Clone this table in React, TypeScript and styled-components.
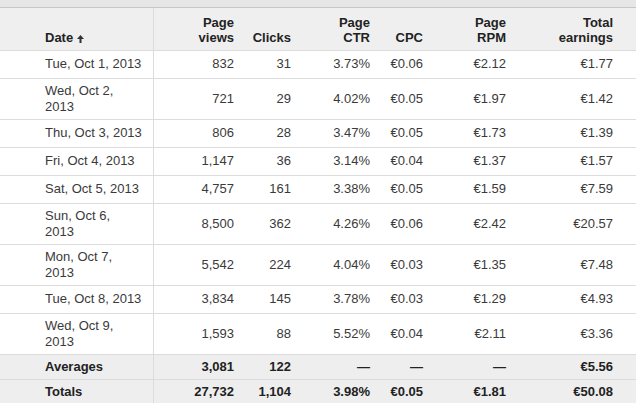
import React from "react";
import styled, { createGlobalStyle } from "styled-components";

const Global = createGlobalStyle`
  html, body { margin: 0; padding: 0; background: #ffffff; }
  body { font-family: "Liberation Sans", Arial, sans-serif; font-size: 13px; color: #333; }
`;

const Page = styled.div`
  width: 636px;
  height: 403px;
  overflow: hidden;
  background: #fff;
`;

const TopStrip = styled.div`
  height: 7px;
  background: #e6e6e6;
  border-bottom: 1px solid #c6c6c6;
`;

const Table = styled.table`
  width: 636px;
  border-collapse: collapse;
  table-layout: fixed;
`;

const HeadRow = styled.tr`
  background: #efefef;
  height: 42px;
`;

const Th = styled.th<{ $align?: "left" | "right"; $first?: boolean; $last?: boolean }>`
  font-weight: bold;
  font-size: 13px;
  line-height: 15px;
  color: #222;
  vertical-align: bottom;
  text-align: ${(p) => p.$align ?? "right"};
  padding: 0 ${(p) => (p.$last ? "23px" : "7px")} 5px ${(p) => (p.$first ? "45px" : "0")};
  border-right: ${(p) => (p.$first ? "1px solid #dcdcdc" : "none")};
`;

const Row = styled.tr<{ $kind?: "data" | "summary" }>`
  height: ${(p) => (p.$kind === "summary" ? "25px" : "28px")};
  background: ${(p) => (p.$kind === "summary" ? "#eeeeee" : "#ffffff")};
`;

const Td = styled.td<{ $first?: boolean; $last?: boolean; $bold?: boolean }>`
  font-size: 13px;
  line-height: 16px;
  color: ${(p) => (p.$bold ? "#222" : "#3a3a3a")};
  font-weight: ${(p) => (p.$bold ? "bold" : "normal")};
  text-align: ${(p) => (p.$first ? "left" : "right")};
  vertical-align: middle;
  padding: ${(p) => (p.$bold ? "3px" : "4px")} ${(p) => (p.$last ? "23px" : "7px")}
    ${(p) => (p.$bold ? "3px" : "4px")} ${(p) => (p.$first ? "45px" : "0")};
  border-top: 1px solid #dcdcdc;
  border-right: ${(p) => (p.$first ? "1px solid #dcdcdc" : "none")};
  white-space: ${(p) => (p.$first ? "pre-line" : "nowrap")};
`;

const SortArrow = styled.svg`
  width: 7px;
  height: 8px;
  margin-left: 4px;
  vertical-align: -1px;
`;

const cols = [153, 88, 57, 79, 53, 83];

const rows: string[][] = [
  ["Tue, Oct 1, 2013", "832", "31", "3.73%", "€0.06", "€2.12", "€1.77"],
  ["Wed, Oct 2,\n2013", "721", "29", "4.02%", "€0.05", "€1.97", "€1.42"],
  ["Thu, Oct 3, 2013", "806", "28", "3.47%", "€0.05", "€1.73", "€1.39"],
  ["Fri, Oct 4, 2013", "1,147", "36", "3.14%", "€0.04", "€1.37", "€1.57"],
  ["Sat, Oct 5, 2013", "4,757", "161", "3.38%", "€0.05", "€1.59", "€7.59"],
  ["Sun, Oct 6,\n2013", "8,500", "362", "4.26%", "€0.06", "€2.42", "€20.57"],
  ["Mon, Oct 7,\n2013", "5,542", "224", "4.04%", "€0.03", "€1.35", "€7.48"],
  ["Tue, Oct 8, 2013", "3,834", "145", "3.78%", "€0.03", "€1.29", "€4.93"],
  ["Wed, Oct 9,\n2013", "1,593", "88", "5.52%", "€0.04", "€2.11", "€3.36"],
];

const summary: string[][] = [
  ["Averages", "3,081", "122", "—", "—", "—", "€5.56"],
  ["Totals", "27,732", "1,104", "3.98%", "€0.05", "€1.81", "€50.08"],
];

export default function App() {
  return (
    <Page>
      <Global />
      <TopStrip />
      <Table>
        <colgroup>
          {cols.map((w, i) => (
            <col key={i} style={{ width: w }} />
          ))}
          <col />
        </colgroup>
        <thead>
          <HeadRow>
            <Th $align="left" $first>
              Date
              <SortArrow viewBox="0 0 7 8">
                <path d="M3.5 0 L7 4 L4.5 4 L4.5 8 L2.5 8 L2.5 4 L0 4 Z" fill="#333" />
              </SortArrow>
            </Th>
            <Th>
              Page
              <br />
              views
            </Th>
            <Th>Clicks</Th>
            <Th>
              Page
              <br />
              CTR
            </Th>
            <Th>CPC</Th>
            <Th>
              Page
              <br />
              RPM
            </Th>
            <Th $last>
              Total
              <br />
              earnings
            </Th>
          </HeadRow>
        </thead>
        <tbody>
          {rows.map((r, i) => (
            <Row key={i}>
              {r.map((c, j) => (
                <Td key={j} $first={j === 0} $last={j === r.length - 1}>
                  {c}
                </Td>
              ))}
            </Row>
          ))}
          {summary.map((r, i) => (
            <Row key={"s" + i} $kind="summary">
              {r.map((c, j) => (
                <Td key={j} $bold $first={j === 0} $last={j === r.length - 1}>
                  {c}
                </Td>
              ))}
            </Row>
          ))}
        </tbody>
      </Table>
    </Page>
  );
}
